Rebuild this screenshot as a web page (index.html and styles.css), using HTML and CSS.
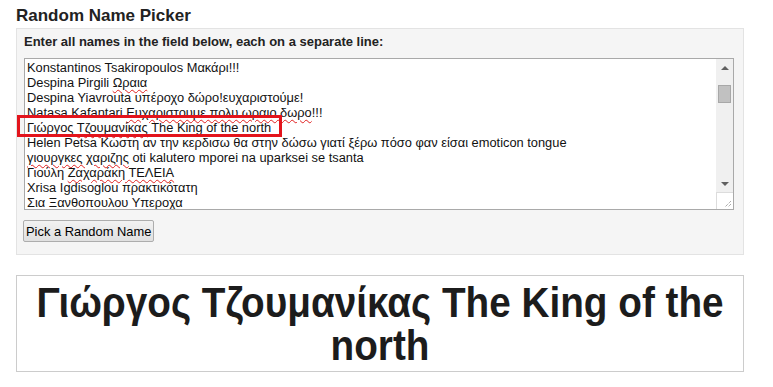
FILE: index.html
```html
<!DOCTYPE html>
<html lang="el">
<head>
  <meta charset="UTF-8" />
  <title>Random Name Picker</title>
  <meta name="viewport" content="width=device-width, initial-scale=1" />
  <link rel="stylesheet" href="styles.css">
</head>
<body>
  <div class="page">
    <h2 class="title">Random Name Picker</h2>

    <div class="panel">
      <label class="panel-label" for="names">Enter all names in the field below, each on a separate line:</label>
      <div class="names" id="names">
        <div class="names-text">
          <div>Konstantinos Tsakiropoulos Μακάρι!!!</div>
          <div>Despina Pirgili <span class="typo">Ωραια</span></div>
          <div>Despina Yiavrouta υπέροχο δώρο!ευχαριστούμε!</div>
          <div>Natasa Kafantari <span class="typo">Ευχαριστουμε πολυ ωραιο δωρο</span>!!!</div>
          <div>Γιώργος <span class="typo">Τζουμανίκας</span> The King of the north</div>
          <div>Helen Petsa Κωστη αν την κερδισω θα στην δώσω γιατί ξέρω πόσο φαν είσαι emoticon tongue</div>
          <div><span class="typo">γιουργκες χαριζης</span> oti kalutero mporei na uparksei se tsanta</div>
          <div>Γιούλη <span class="typo">Ζαχαράκη ΤΕΛΕΙΑ</span></div>
          <div>Xrisa Igdisoglou πρακτικότατη</div>
          <div><span class="typo">Σια Ξανθοπουλου Υπεροχα</span></div>
        </div>
        <div class="scrollbar">
          <div class="sb-btn"><span class="arrow-up"></span></div>
          <div class="sb-track"><div class="sb-thumb"></div></div>
          <div class="sb-btn"><span class="arrow-down"></span></div>
          <div class="sb-corner">
            <svg width="16" height="16" viewBox="0 0 16 16">
              <path d="M14 8 L8 14 M14 11 L11 14" stroke="#888" stroke-width="1" stroke-dasharray="1 1" fill="none"/>
            </svg>
          </div>
        </div>
        <div class="picked-mark"></div>
      </div>
      <button class="pick-btn" type="button">Pick a Random Name</button>
    </div>

    <div class="result">
      <h1>Γιώργος Τζουμανίκας The King of the north</h1>
    </div>
  </div>
</body>
</html>
```

FILE: styles.css
```css
body {
  margin: 0;
  padding: 0;
  background: #fff;
  font-family: "Liberation Sans", Arial, sans-serif;
  color: #222;
}

.page {
  padding: 0 16px;
  width: 728px;
}

.title {
  font-size: 17px;
  font-weight: bold;
  margin: 6px 0 2px;
  line-height: 20px;
}

.panel {
  background: #f5f5f5;
  border: 1px solid #e3e3e3;
  padding: 5px 9px 12px 6px;
}

.panel-label {
  display: block;
  font-size: 13px;
  font-weight: bold;
  line-height: 15px;
  margin-bottom: 9px;
  margin-left: 1px;
  color: #222;
}

.names {
  position: relative;
  display: flex;
  margin-left: 1px;
  width: 708px;
  height: 150px;
  border: 1px solid #a9a9a9;
  background: #fff;
}

.names-text {
  flex: 1;
  overflow: hidden;
  padding: 1px 2px;
  font-size: 12.85px;
  line-height: 15px;
  color: #111;
  white-space: nowrap;
}

.typo {
  text-decoration: underline wavy #e02020;
  text-decoration-thickness: 1px;
  text-underline-offset: 2px;
}

.scrollbar {
  width: 17px;
  display: flex;
  flex-direction: column;
  background: #f0f0f0;
}

.sb-btn {
  height: 17px;
  display: flex;
  align-items: center;
  justify-content: center;
}

.arrow-up {
  width: 0;
  height: 0;
  border-left: 4px solid transparent;
  border-right: 4px solid transparent;
  border-bottom: 4px solid #606060;
}

.arrow-down {
  width: 0;
  height: 0;
  border-left: 4px solid transparent;
  border-right: 4px solid transparent;
  border-top: 4px solid #606060;
}

.sb-track {
  flex: 1;
  padding-top: 9px;
}

.sb-thumb {
  margin: 0 2px;
  height: 16px;
  background: #c1c1c1;
  border: 1px solid #a8a8a8;
}

.sb-corner {
  height: 16px;
  background: #fff;
  border-top: 1px solid #dcdcdc;
  border-left: 1px solid #dcdcdc;
}

.picked-mark {
  position: absolute;
  left: -8px;
  top: 56px;
  width: 259px;
  height: 16px;
  border: 3px solid #e3141c;
}

.pick-btn {
  margin-top: 10px;
  font-family: "Liberation Sans", Arial, sans-serif;
  font-size: 12.9px;
  color: #000;
  padding: 1px 2px;
  height: 22px;
  border: 1px solid #adadad;
  border-radius: 2px;
  background: linear-gradient(#f2f2f2, #e0e0e0);
}

.result {
  margin-top: 20px;
  border: 1px solid #cccccc;
  padding: 5px 8px 4px;
  overflow: hidden;
}

/* the heading font is a narrow sans; squeeze Liberation Sans to match */
.result h1 {
  margin: 0;
  width: calc(710px / 0.9);
  transform: scaleX(0.9);
  transform-origin: left top;
  text-align: center;
  font-family: "Liberation Sans", Arial, sans-serif;
  font-size: 43px;
  line-height: 43px;
  font-weight: bold;
  color: #1c1c1c;
}
```
